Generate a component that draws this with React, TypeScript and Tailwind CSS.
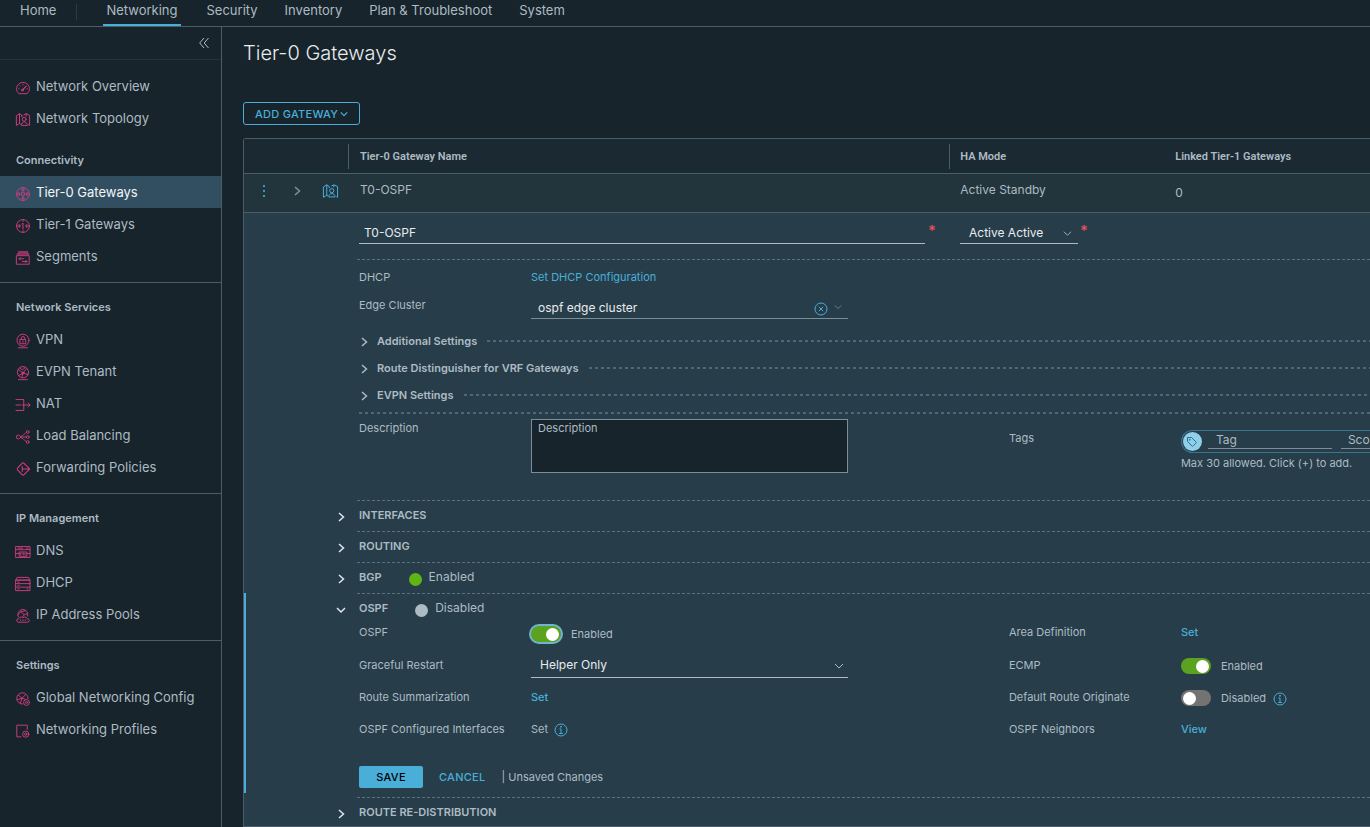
import type { ReactNode } from 'react';

/* ---------- icons ---------- */

function Pink({ children }: { children: ReactNode }) {
  return (
    <svg
      viewBox="0 0 36 36"
      className="mt-1 size-[14px] shrink-0 overflow-visible"
      fill="none"
      stroke="#d23c82"
      strokeWidth="2.4"
      strokeLinejoin="round"
      strokeLinecap="round"
      aria-hidden="true"
    >
      {children}
    </svg>
  );
}

const mapPath = (
  <>
    <path d="M12 29l-3-2-8 5V7l8-5 6 4" />
    <path d="M9 2v25" />
    <path d="M15 6v4M26 2l9 4v26l-3-2M26 2l-6 3M26 2v6" />
    <circle cx="21" cy="16" r="5" />
    <path d="M14 31c0-5 3-8 7-8s8 3 8 8z" />
  </>
);

const icons = {
  gauge: (
    <Pink>
      <path d="M7 32C3 29 1.500 25 1.500 20a16.500 16.500 0 0 1 33 0c0 5-1.500 9-5.500 12z" />
      <path d="M18 22l8-9" strokeWidth="3" />
      <circle cx="16.500" cy="23.500" r="2.500" />
      <path d="M18 9v1M10 12l1 1M7 20h1M28 20h1" />
    </Pink>
  ),
  map: <Pink>{mapPath}</Pink>,
  tier0: (
    <Pink>
      <circle cx="18" cy="18" r="16.500" />
      <ellipse cx="18" cy="18" rx="4" ry="5.500" />
      <path d="M18 2v7M18 27v7M2 18h8M26 18h8M14 6l4 3 4-3M14 30l4-3 4 3M7 14l3 4-3 4M29 14l-3 4 3 4" />
    </Pink>
  ),
  tier1: (
    <Pink>
      <circle cx="18" cy="18" r="16.500" />
      <path d="M15 13l3-2.500V26M18 2v4M18 30v4M2 18h9M25 18h9M8 14l3 4-3 4M28 14l-3 4 3 4" />
    </Pink>
  ),
  segments: (
    <Pink>
      <path d="M6 2h24M3 8h30M5 8V5h26v3" />
      <rect x="2" y="12" width="32" height="22" />
      <path d="M8 20h12M8 20l3-3M8 20l3 3M28 27H16M28 27l-3-3M28 27l-3 3" />
    </Pink>
  ),
  vpn: (
    <Pink>
      <circle cx="18" cy="16" r="15.500" />
      <rect x="11" y="14" width="14" height="11" />
      <path d="M13.500 14v-3a4.500 4.500 0 0 1 9 0v3M18 18v3M6 35.500h24" />
    </Pink>
  ),
  evpn: (
    <Pink>
      <circle cx="18" cy="16" r="14.500" />
      <path d="M6 9l12 9 9-11M18 18l-3 12M18 18l13 4M8 24l10-6M10 5l6 5 8-6M6 35h24" />
      <circle cx="18" cy="18" r="2.500" />
    </Pink>
  ),
  nat: (
    <Pink>
      <path d="M0 4h20v28H0M0 18h12M16 18h20M31 13l5 5-5 5" />
    </Pink>
  ),
  lb: (
    <Pink>
      <path d="M12 18c-2-4-4-5-6-5a5 5 0 0 0 0 10c2 0 4-1 6-5zM12 18c1-3 3-4 5-4M12 18c1 3 3 4 5 4M12 18h14M19 13l6-6M19 23l6 6" />
      <circle cx="30" cy="5" r="3.500" />
      <circle cx="30" cy="18" r="3.500" />
      <circle cx="30" cy="31" r="3.500" />
    </Pink>
  ),
  fwd: (
    <Pink>
      <path d="M27 10l-7-7q-2-1.500-4 0L4 16q-1.500 2 0 4l12 13q2 1.500 4 0l7-7M16 12v12M16 18h19M29 12l6 6-6 6" strokeWidth="2.8" />
    </Pink>
  ),
  dns: (
    <Pink>
      <rect x="0" y="4" width="36" height="28" />
      <path d="M0 12h36M5 8h12M26 8h5M8 28V18h20v10zM0 22h8M28 22h8M12 21v4M16 21h3v4M23 21v4" />
    </Pink>
  ),
  dhcp: (
    <Pink>
      <path d="M4 1h28l4 7H0z" />
      <rect x="0" y="8" width="36" height="27" />
      <path d="M0 17h36M0 26h36M5 13h3M5 21.500h3M5 30.500h3M28 30.500h3" />
    </Pink>
  ),
  pools: (
    <Pink>
      <path d="M6 20A13 13 0 1 1 30 18M4 15l9-8 12-3M13 7l8 8 8-3M21 15l-3 4" />
      <path d="M6 34a4.500 4.500 0 0 1 1-9c1-4 7-6 11-3 5-3 10 0 11 3a4.500 4.500 0 0 1 1 9zM12 28v2M18 28v2M24 28v2" />
    </Pink>
  ),
  globe: (
    <Pink>
      <path d="M17 31A14.500 14.500 0 1 1 31 17" />
      <path d="M6 8l10 8 8-9M16 16l-5 13M16 16l8 3M3 20l13-4" />
      <circle cx="27" cy="27" r="7.500" />
      <circle cx="27" cy="27" r="2.500" />
    </Pink>
  ),
  profile: (
    <Pink>
      <path d="M13 33H2V3h27v11" />
      <circle cx="25" cy="26" r="8" />
      <circle cx="25" cy="26" r="3" />
    </Pink>
  ),
};

function Chevron({ dir, className }: { dir: 'right' | 'down'; className: string }) {
  return (
    <svg viewBox="0 0 10 10" className={className} fill="none" stroke="currentColor" aria-hidden="true">
      <path d={dir === 'right' ? 'M3 1l4.500 4L3 9' : 'M1 3l4 4 4-4'} />
    </svg>
  );
}

function Info() {
  return (
    <svg viewBox="0 0 14 14" className="mt-0.5 size-[14px] text-[#49afd9]" fill="none" stroke="currentColor" aria-hidden="true">
      <circle cx="7" cy="7" r="6" />
      <path d="M5.500 6h1.500v4.500M5.200 10.500h3.600" />
      <circle cx="7" cy="3.800" r=".5" fill="currentColor" />
    </svg>
  );
}

/* ---------- data ---------- */

type IconName = keyof typeof icons;
type Item = { label: string; icon: IconName; active?: boolean };

const overview: Item[] = [
  { label: 'Network Overview', icon: 'gauge' },
  { label: 'Network Topology', icon: 'map' },
];

const groups: { title: string; items: Item[] }[] = [
  {
    title: 'Connectivity',
    items: [
      { label: 'Tier-0 Gateways', icon: 'tier0', active: true },
      { label: 'Tier-1 Gateways', icon: 'tier1' },
      { label: 'Segments', icon: 'segments' },
    ],
  },
  {
    title: 'Network Services',
    items: [
      { label: 'VPN', icon: 'vpn' },
      { label: 'EVPN Tenant', icon: 'evpn' },
      { label: 'NAT', icon: 'nat' },
      { label: 'Load Balancing', icon: 'lb' },
      { label: 'Forwarding Policies', icon: 'fwd' },
    ],
  },
  {
    title: 'IP Management',
    items: [
      { label: 'DNS', icon: 'dns' },
      { label: 'DHCP', icon: 'dhcp' },
      { label: 'IP Address Pools', icon: 'pools' },
    ],
  },
  {
    title: 'Settings',
    items: [
      { label: 'Global Networking Config', icon: 'globe' },
      { label: 'Networking Profiles', icon: 'profile' },
    ],
  },
];

/* ---------- building blocks ---------- */

function NavItem({ item }: { item: Item }) {
  return (
    <li>
      <a
        href="#"
        aria-current={item.active ? 'page' : undefined}
        className={
          item.active
            ? 'flex h-8 items-center gap-1.5 bg-[#324f62] pl-4 text-[13px] text-[#f2f6f8]'
            : 'flex h-8 items-center gap-1.5 pl-4 text-[13px] text-[#adbbc4]'
        }
      >
        {icons[item.icon]}
        {item.label}
      </a>
    </li>
  );
}

function Toggle({ id, on, focused }: { id: string; on?: boolean; focused?: boolean }) {
  return (
    <input
      id={id}
      type="checkbox"
      role="switch"
      defaultChecked={on}
      className={
        'flex h-4 w-[30px] shrink-0 appearance-none items-center rounded-full bg-[#737373] p-0.5 before:block before:size-[13px] before:rounded-full before:bg-white checked:justify-end checked:bg-[#5aa220]' +
        (focused ? ' ring-2 ring-[#6fb3cf]' : '')
      }
    />
  );
}

function Field({ id, label, children }: { id?: string; label: string; children: ReactNode }) {
  return (
    <div className="flex h-full min-w-0 items-center">
      {id ? (
        <label htmlFor={id} className="w-[172px] shrink-0">
          {label}
        </label>
      ) : (
        <span className="w-[172px] shrink-0">{label}</span>
      )}
      {children}
    </div>
  );
}

function Section({
  title,
  open,
  status,
  children,
}: {
  title: string;
  open?: boolean;
  status?: { text: string; on: boolean };
  children?: ReactNode;
}) {
  return (
    <section
      className={
        open
          ? 'mb-1 grid grid-cols-[111px_1fr] border-l-2 border-[#49afd9]'
          : 'mb-0.5 grid grid-cols-[113px_1fr] last:mb-0'
      }
    >
      <div className="flex h-[29px] items-center justify-end pt-1 pr-[11px] text-[#dfe7ec]">
        <button type="button" aria-label={'Toggle ' + title} aria-expanded={!!open}>
          <Chevron dir={open ? 'down' : 'right'} className="size-[10px] stroke-[1.500]" />
        </button>
      </div>
      <div className="border-t border-dashed border-[#5d727e] pl-0.5">
        <div className="flex h-7 items-center gap-[27px]">
          <h3 className="font-semibold">{title}</h3>
          {status && (
            <span className="flex items-center gap-[7px] text-[12px]">
              <span
                className={
                  status.on
                    ? 'mt-1 size-[13px] rounded-full bg-[#60b515]'
                    : 'mt-1 size-[13px] rounded-full bg-[#adbbc4]'
                }
              />
              {status.text}
            </span>
          )}
        </div>
        {children}
      </div>
    </section>
  );
}

function Accordion({ title }: { title: string }) {
  return (
    <div className="flex h-[27px] items-center gap-[10px]">
      <button type="button" aria-expanded="false" className="flex items-center gap-2 font-semibold">
        <Chevron dir="right" className="mt-0.5 size-[10px] stroke-[1.500]" />
        {title}
      </button>
      <span className="h-0.5 flex-1 bg-[repeating-linear-gradient(90deg,#4e6875_0_3px,transparent_3px_6px)]" />
    </div>
  );
}

const link = 'font-medium text-[#49afd9]';

/* ---------- page ---------- */

export default function App() {
  return (
    <div className="flex min-h-screen flex-col overflow-hidden bg-[#17242b] font-[Inter,'Open_Sans',sans-serif] text-[11px] leading-4 text-[#adbbc4]">
      <header className="flex h-[27px] border-b border-[#4a5d68]">
        <nav aria-label="Main" className="flex items-start text-[13px] leading-5">
          <a href="#" className="px-5">
            Home
          </a>
          <span className="mt-1 mr-[26px] h-4 w-px bg-[#2a3b44]" />
          <a href="#" aria-current="page" className="h-[26px] border-b-2 border-[#49afd9] px-[3px]">
            Networking
          </a>
          <a href="#" className="ml-[26px]">
            Security
          </a>
          <a href="#" className="ml-[27px]">
            Inventory
          </a>
          <a href="#" className="ml-[27px]">
            Plan &amp; Troubleshoot
          </a>
          <a href="#" className="ml-[27px]">
            System
          </a>
        </nav>
      </header>

      <div className="flex flex-1">
        <aside className="w-[222px] shrink-0 border-r border-[#4a5d68]">
          <div className="flex h-[33px] items-center justify-end border-b border-[#22343c] pr-3">
            <button type="button" aria-label="Collapse navigation">
              <svg viewBox="0 0 10 10" className="size-[10px]" fill="none" stroke="currentColor" aria-hidden="true">
                <path d="M5 0L.7 5 5 10M9.500 0L5.200 5l4.300 5" />
              </svg>
            </button>
          </div>
          <nav aria-label="Networking">
            <ul className="pt-[10px]">
              {overview.map((item) => (
                <NavItem key={item.label} item={item} />
              ))}
            </ul>
            {groups.map((group, i) => (
              <section
                key={group.title}
                className={i === 0 ? 'pt-[10px] pb-[10px]' : 'border-t border-[#4a5d68] pt-2 pb-[10px]'}
              >
                <h2 className="flex h-8 items-center pl-4 font-semibold">{group.title}</h2>
                <ul>
                  {group.items.map((item) => (
                    <NavItem key={item.label} item={item} />
                  ))}
                </ul>
              </section>
            ))}
          </nav>
        </aside>

        <main className="min-w-0 flex-1 pl-[21px]">
          <h1 className="pt-3 text-[20px] leading-7 font-light text-[#e9ecef]">Tier-0 Gateways</h1>
          <button
            type="button"
            className="mt-[35px] flex h-[23px] items-center gap-0.5 rounded-[3px] border border-[#49afd9] px-[11px] font-medium tracking-wide text-[#49afd9]"
          >
            ADD GATEWAY
            <Chevron dir="down" className="size-2 stroke-[1.500]" />
          </button>

          <table className="mt-[13px] w-full table-fixed border-separate border-spacing-0 rounded-tl-[3px] border-t border-b border-l border-[#4a5d68] text-left">
            <colgroup>
              <col className="w-[105px]" />
              <col className="w-[53.4%]" />
              <col className="w-[19%]" />
              <col />
            </colgroup>
            <thead className="font-[Roboto,'Open_Sans',sans-serif]">
              <tr className="h-[35px] bg-[#1b2a32]">
                <th className="border-b border-[#4a5d68] p-0" aria-label="Actions">
                  <div className="h-[25px] border-r border-[#4a5d68]" />
                </th>
                <th className="border-b border-[#4a5d68] p-0 font-semibold">
                  <div className="flex h-[25px] items-center border-r border-[#4a5d68] pt-0.5 pl-[11px]">
                    Tier-0 Gateway Name
                  </div>
                </th>
                <th className="border-b border-[#4a5d68] p-0 pt-0.5 pl-[10px] font-semibold">HA Mode</th>
                <th className="border-b border-[#4a5d68] p-0 pt-0.5 pl-[11px] font-semibold">Linked Tier-1 Gateways</th>
              </tr>
            </thead>
            <tbody>
              <tr className="h-[39px] bg-[#22343c] text-[12px]">
                <td className="border-b border-[#4a5d68] p-0 pb-1">
                  <div className="flex items-center">
                    <button type="button" aria-label="Row actions" className="ml-[18px] text-[#49afd9]">
                      <svg viewBox="0 0 4 14" className="h-[14px] w-1" fill="currentColor" aria-hidden="true">
                        <circle cx="2" cy="2" r="1.100" />
                        <circle cx="2" cy="7" r="1.100" />
                        <circle cx="2" cy="12" r="1.100" />
                      </svg>
                    </button>
                    <button type="button" aria-label="Collapse row" className="ml-[26px] text-[#7f929d]">
                      <Chevron dir="right" className="size-[10px] stroke-[1.500]" />
                    </button>
                    <button type="button" aria-label="Topology" className="ml-[21px] text-[#49afd9]">
                      <svg
                        viewBox="0 0 36 36"
                        className="size-[15px] overflow-visible"
                        fill="none"
                        stroke="currentColor"
                        strokeWidth="2.400"
                        strokeLinejoin="round"
                        aria-hidden="true"
                      >
                        {mapPath}
                      </svg>
                    </button>
                  </div>
                </td>
                <td className="border-b border-[#4a5d68] p-0 pb-1.5 pl-[11px]">T0-OSPF</td>
                <td className="border-b border-[#4a5d68] p-0 pb-1.5 pl-[10px]">Active Standby</td>
                <td className="border-b border-[#4a5d68] p-0 pl-[11px]">0</td>
              </tr>
              <tr className="bg-[#273d49]">
                <td colSpan={4} className="p-0">
                  <div className="grid grid-cols-[601fr_410fr] pt-2 pb-[15px] pl-[115px] text-[12px]">
                    <div className="mr-6 flex min-w-0 items-start gap-[3px]">
                      <input
                        aria-label="Tier-0 Gateway Name"
                        defaultValue="T0-OSPF"
                        className="h-[23px] min-w-0 flex-1 border-b border-[#adbbc4] px-[5px] text-[#e9ecef]"
                      />
                      <span className="w-2 text-[14px] leading-5 font-bold text-[#e0505a]">*</span>
                    </div>
                    <div className="flex min-w-0 items-start gap-0.5">
                      <div className="relative">
                        <select
                          aria-label="HA Mode"
                          className="h-[23px] w-[118px] appearance-none border-b border-[#adbbc4] pt-px pl-[9px] text-[#e9ecef]"
                        >
                          <option>Active Active</option>
                          <option>Active Standby</option>
                        </select>
                        <Chevron dir="down" className="pointer-events-none absolute top-2 right-1.5 size-[9px]" />
                      </div>
                      <span className="text-[14px] leading-5 font-bold text-[#e0505a]">*</span>
                    </div>
                  </div>

                  <div className="ml-[113px] border-t border-dashed border-[#5d727e] pt-2 pb-[27px] pl-0.5">
                    <div className="flex h-[18px] items-center">
                      <Field label="DHCP">
                        <a href="#" className="text-[#49afd9]">
                          Set DHCP Configuration
                        </a>
                      </Field>
                    </div>
                    <div className="mt-[5px] flex h-7 items-center">
                      <Field id="edge" label="Edge Cluster">
                        <div className="flex h-7 w-[317px] items-center border-b border-[#7b8f9a] pt-1">
                          <input
                            id="edge"
                            defaultValue="ospf edge cluster"
                            className="min-w-0 flex-1 pt-0.5 pl-[7px] text-[12px] text-[#e9ecef]"
                          />
                          <button type="button" aria-label="Clear" className="mt-1 text-[#49afd9]">
                            <svg viewBox="0 0 14 14" className="size-[14px]" fill="none" stroke="currentColor" aria-hidden="true">
                              <circle cx="7" cy="7" r="6" />
                              <path d="M4.800 4.800l4.400 4.400M9.200 4.800L4.800 9.200" />
                            </svg>
                          </button>
                          <Chevron dir="down" className="mr-1.5 ml-1.5 size-[8px] text-[#7b8f9a]" />
                        </div>
                      </Field>
                    </div>
                    <div className="mt-2">
                      <Accordion title="Additional Settings" />
                      <Accordion title="Route Distinguisher for VRF Gateways" />
                      <Accordion title="EVPN Settings" />
                    </div>
                    <div className="mt-1 h-0.5 bg-[repeating-linear-gradient(90deg,#4e6875_0_3px,transparent_3px_6px)]" />
                    <div className="mt-[5px] grid grid-cols-[9fr_5fr] items-start">
                      <div className="flex min-w-0 items-start">
                        <label htmlFor="description" className="w-[172px] shrink-0 pt-px">
                          Description
                        </label>
                        <textarea
                          id="description"
                          placeholder="Description"
                          className="block h-[54px] w-[317px] resize-none border border-[#7b8f9a] bg-[#17242b] px-1.5 placeholder:text-[#adbbc4]"
                        />
                      </div>
                      <div className="flex min-w-0 items-start pt-[11px]">
                        <label htmlFor="tag" className="w-[172px] shrink-0">
                          Tags
                        </label>
                        <div className="min-w-0 flex-1">
                          <div className="flex h-[23px] items-center overflow-hidden rounded-l-full border border-r-0 border-[#3b7691] text-[12px]">
                            <span className="mr-1.5 ml-px grid size-[19px] shrink-0 place-items-center rounded-full bg-[#8fcfe8] text-[#2f6f93]">
                              <svg viewBox="0 0 12 12" className="size-3" fill="none" stroke="currentColor" aria-hidden="true">
                                <path d="M1.500 1.500h4l5 5-4 4-5-5z" strokeLinejoin="round" />
                                <circle cx="3.800" cy="3.800" r=".5" />
                              </svg>
                            </span>
                            <input
                              id="tag"
                              placeholder="Tag"
                              className="mb-1 h-[18px] w-[124px] shrink-0 border-b border-[#7b8f9a] pl-2 placeholder:text-[#adbbc4]"
                            />
                            <input
                              aria-label="Scope"
                              placeholder="Scope"
                              className="mb-1 ml-[9px] h-[18px] w-[124px] shrink-0 border-b border-[#7b8f9a] pl-[7px] placeholder:text-[#adbbc4]"
                            />
                          </div>
                          <p className="mt-0.5 whitespace-nowrap">Max 30 allowed. Click (+) to add.</p>
                        </div>
                      </div>
                    </div>
                  </div>

                  <Section title="INTERFACES" />
                  <Section title="ROUTING" />
                  <Section title="BGP" status={{ text: 'Enabled', on: true }} />
                  <Section title="OSPF" open status={{ text: 'Disabled', on: false }}>
                    <div className="grid grid-cols-[9fr_5fr] grid-rows-[25px_32px_32px_32px] pt-0.5">
                      <div className="h-4 min-w-0">
                        <Field id="ospf" label="OSPF">
                          <div className="flex items-center gap-[10px] pt-1">
                            <Toggle id="ospf" on focused />
                            Enabled
                          </div>
                        </Field>
                      </div>
                      <div className="h-4 min-w-0">
                        <Field label="Area Definition">
                          <a href="#" className={link}>
                            Set
                          </a>
                        </Field>
                      </div>
                      <Field id="restart" label="Graceful Restart">
                        <div className="relative">
                          <select
                            id="restart"
                            className="h-[25px] w-[317px] appearance-none border-b border-[#adbbc4] pt-px pl-[9px] text-[12px] text-[#e9ecef]"
                          >
                            <option>Helper Only</option>
                            <option>Disable</option>
                          </select>
                          <Chevron dir="down" className="pointer-events-none absolute top-2 right-1 size-[10px]" />
                        </div>
                      </Field>
                      <Field id="ecmp" label="ECMP">
                        <div className="flex items-center gap-[10px] pt-0.5">
                          <Toggle id="ecmp" on />
                          Enabled
                        </div>
                      </Field>
                      <Field label="Route Summarization">
                        <a href="#" className={link}>
                          Set
                        </a>
                      </Field>
                      <Field id="originate" label="Default Route Originate">
                        <div className="flex items-center gap-[10px] pt-0.5">
                          <Toggle id="originate" />
                          <span className="flex items-center gap-[7px]">
                            Disabled
                            <Info />
                          </span>
                        </div>
                      </Field>
                      <Field label="OSPF Configured Interfaces">
                        <span className="flex items-center gap-1.5">
                          Set
                          <Info />
                        </span>
                      </Field>
                      <Field label="OSPF Neighbors">
                        <a href="#" className={link}>
                          View
                        </a>
                      </Field>
                    </div>
                    <div className="flex items-center pt-[21px] pb-[5px]">
                      <button
                        type="button"
                        className="h-[22px] w-16 rounded-[2px] bg-[#49afd9] font-medium tracking-wide text-black"
                      >
                        SAVE
                      </button>
                      <button type="button" className="ml-4 font-medium tracking-wide text-[#49afd9]">
                        CANCEL
                      </button>
                      <span className="ml-4">| Unsaved Changes</span>
                    </div>
                  </Section>
                  <Section title="ROUTE RE-DISTRIBUTION" />
                </td>
              </tr>
            </tbody>
          </table>
        </main>
      </div>
    </div>
  );
}
